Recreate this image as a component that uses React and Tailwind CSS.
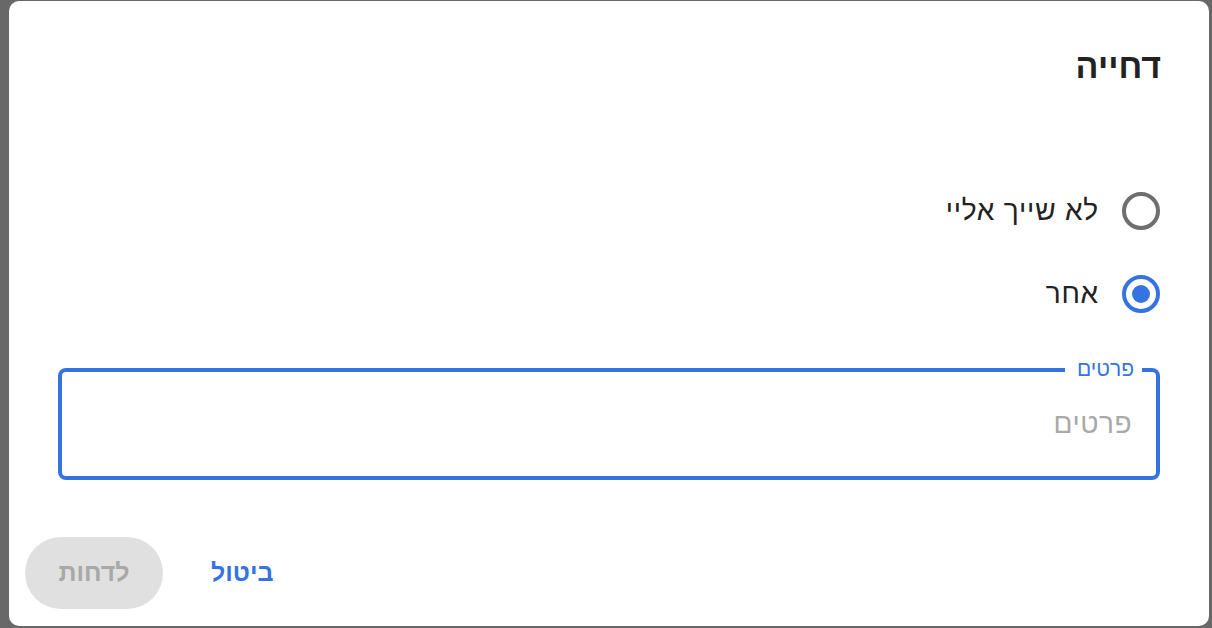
import React, { useState } from "react";

const font = { fontFamily: '"Liberation Sans", "DejaVu Sans", Arial, sans-serif' };

function Radio({ checked }) {
  return (
    <span
      className={`flex h-[38px] w-[38px] shrink-0 items-center justify-center rounded-full border-[4px] ${
        checked ? "border-[#3574e0]" : "border-[#6e6e6e]"
      }`}
    >
      {checked && <span className="h-[18px] w-[18px] rounded-full bg-[#3574e0]" />}
    </span>
  );
}

export default function App() {
  const [reason, setReason] = useState("other");
  const [details, setDetails] = useState("");

  const options = [
    { id: "notMine", label: "לא שייך אליי" },
    { id: "other", label: "אחר" },
  ];

  return (
    <div className="h-[628px] w-[1212px] overflow-hidden bg-[#686868] pl-[9px] pt-[1px]" style={font}>
      <div dir="rtl" className="flex h-[625px] w-[1200px] flex-col rounded-[10px] bg-white">
        {/* Title */}
        <h2 className="mt-[44px] px-[48px] text-[34px] font-bold leading-[42px] text-[#222]">דחייה</h2>

        {/* Options */}
        <div className="mt-[96px] flex flex-col gap-[27px] px-[49px]">
          {options.map((o) => (
            <label
              key={o.id}
              className="flex h-[56px] cursor-pointer items-center gap-[23px]"
              onClick={() => setReason(o.id)}
            >
              <Radio checked={reason === o.id} />
              <span className="text-[28px] tracking-[0.8px] text-[#222]">{o.label}</span>
            </label>
          ))}
        </div>

        {/* Details field */}
        <div className="mt-[46px] px-[49px]">
          <div className="relative h-[112px] rounded-[8px] border-[4px] border-[#3574e0]">
            <span className="absolute right-[14px] top-[-15px] bg-white pl-[12px] pr-[8px] text-[21px] leading-[24px] text-[#3574e0]">
              פרטים
            </span>
            <input
              value={details}
              onChange={(e) => setDetails(e.target.value)}
              placeholder="פרטים"
              className="h-full w-full bg-transparent px-[24px] text-[28px] tracking-[0.5px] text-[#222] outline-none placeholder:text-[#a9a9a9]"
            />
          </div>
        </div>

        {/* Actions */}
        <div className="mt-[57px] flex justify-end gap-[24px] pl-[16px]">
          <button className="h-[72px] rounded-full px-[24px] text-[25px] font-bold text-[#3574e0]">ביטול</button>
          <button
            disabled
            className="h-[72px] w-[138px] rounded-full bg-[#e0e0e0] text-[25px] font-bold text-[#a8a8a8]"
          >
            לדחות
          </button>
        </div>
      </div>
    </div>
  );
}
